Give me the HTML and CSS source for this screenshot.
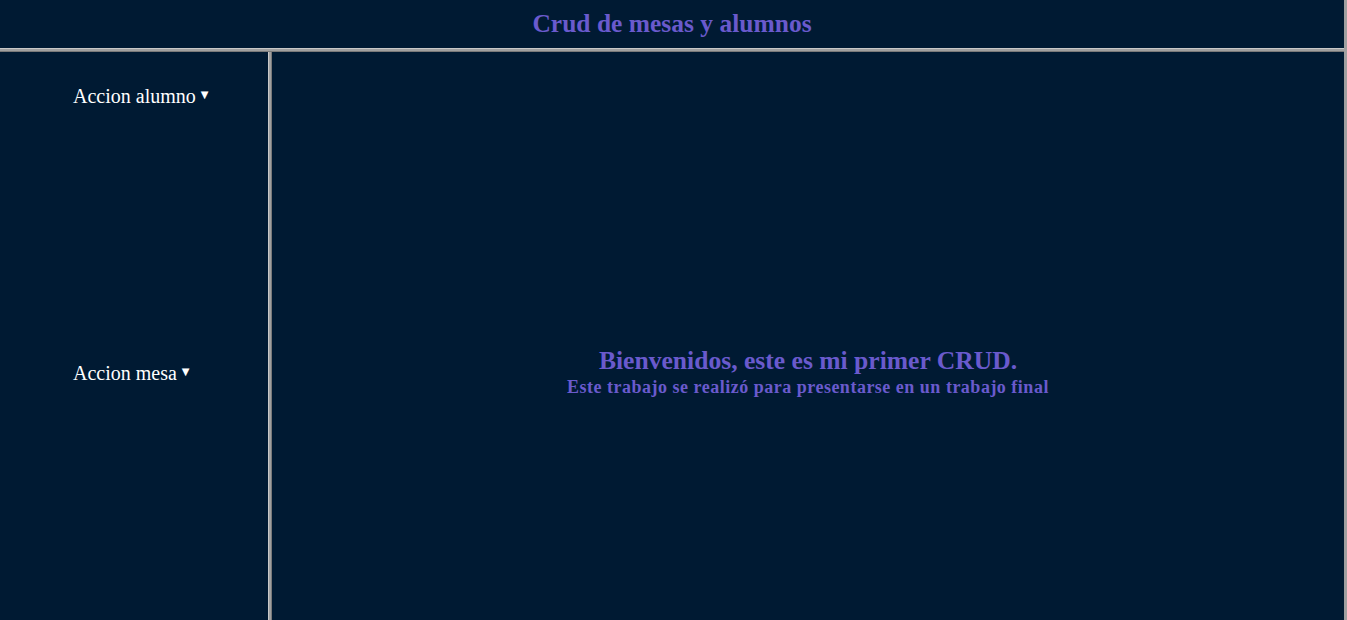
FILE: index.html
```html
<!DOCTYPE html>
<html lang="es">
<head>
<meta charset="utf-8">
<title>Crud de mesas y alumnos</title>
<link rel="stylesheet" href="styles.css">
</head>
<body>
<div class="frameset">
  <header class="top">
    <h2 class="title">Crud de mesas y alumnos</h2>
  </header>
  <div class="hsep"></div>
  <div class="bottom">
    <nav class="menu">
      <div class="item item-alumno">Accion alumno <span class="caret">&#9660;</span></div>
      <div class="item item-mesa">Accion mesa <span class="caret">&#9660;</span></div>
    </nav>
    <div class="vsep"></div>
    <main class="content">
      <h2 class="welcome">Bienvenidos, este es mi primer CRUD.</h2>
      <h4 class="sub">Este trabajo se realizó para presentarse en un trabajo final</h4>
    </main>
  </div>
</div>
</body>
</html>
```
FILE: styles.css
```css
html, body {
  margin: 0;
  padding: 0;
  height: 620px;
  overflow: hidden;
  background: #001a33;
}
.frameset {
  display: flex;
  flex-direction: column;
  height: 620px;
  width: 1344px;
  border-right: 3px solid #a0a0a0;
  background: #001a33;
  font-family: "Liberation Serif", "Times New Roman", serif;
}
.top {
  height: 48px;
  display: flex;
  justify-content: center;
}
.title {
  margin: 9px 0 0;
  font-size: 25.5px;
  font-weight: bold;
  color: #6a5acd;
  line-height: 29px;
}
.hsep {
  height: 4px;
  background: linear-gradient(#c8c8c8 0 1px, #a0a0a0 1px 3px, #7a7a7a 3px 4px);
}
.bottom {
  flex: 1;
  display: flex;
}
.menu {
  width: 268px;
  display: flex;
  flex-direction: column;
  padding-left: 73px;
  box-sizing: border-box;
}
.item {
  color: #ffffff;
  font-size: 20px;
  line-height: 24px;
}
.item-alumno { margin-top: 31px; }
.item-mesa { margin-top: 252px; }
.caret {
  font-size: 10px;
  vertical-align: 5px;
  font-family: "DejaVu Sans", sans-serif;
}
.vsep {
  width: 4px;
  background: linear-gradient(90deg, #c8c8c8 0 1px, #a0a0a0 1px 3px, #7a7a7a 3px 4px);
}
.content {
  flex: 1;
  display: flex;
  flex-direction: column;
  align-items: center;
  padding-top: 294px;
}
.welcome {
  margin: 0;
  font-size: 25.6px;
  line-height: 30px;
  color: #6a5acd;
}
.sub {
  margin: 1px 0 0;
  font-size: 18px;
  line-height: 20px;
  color: #6a5acd;
  letter-spacing: 0.5px;
}
```
